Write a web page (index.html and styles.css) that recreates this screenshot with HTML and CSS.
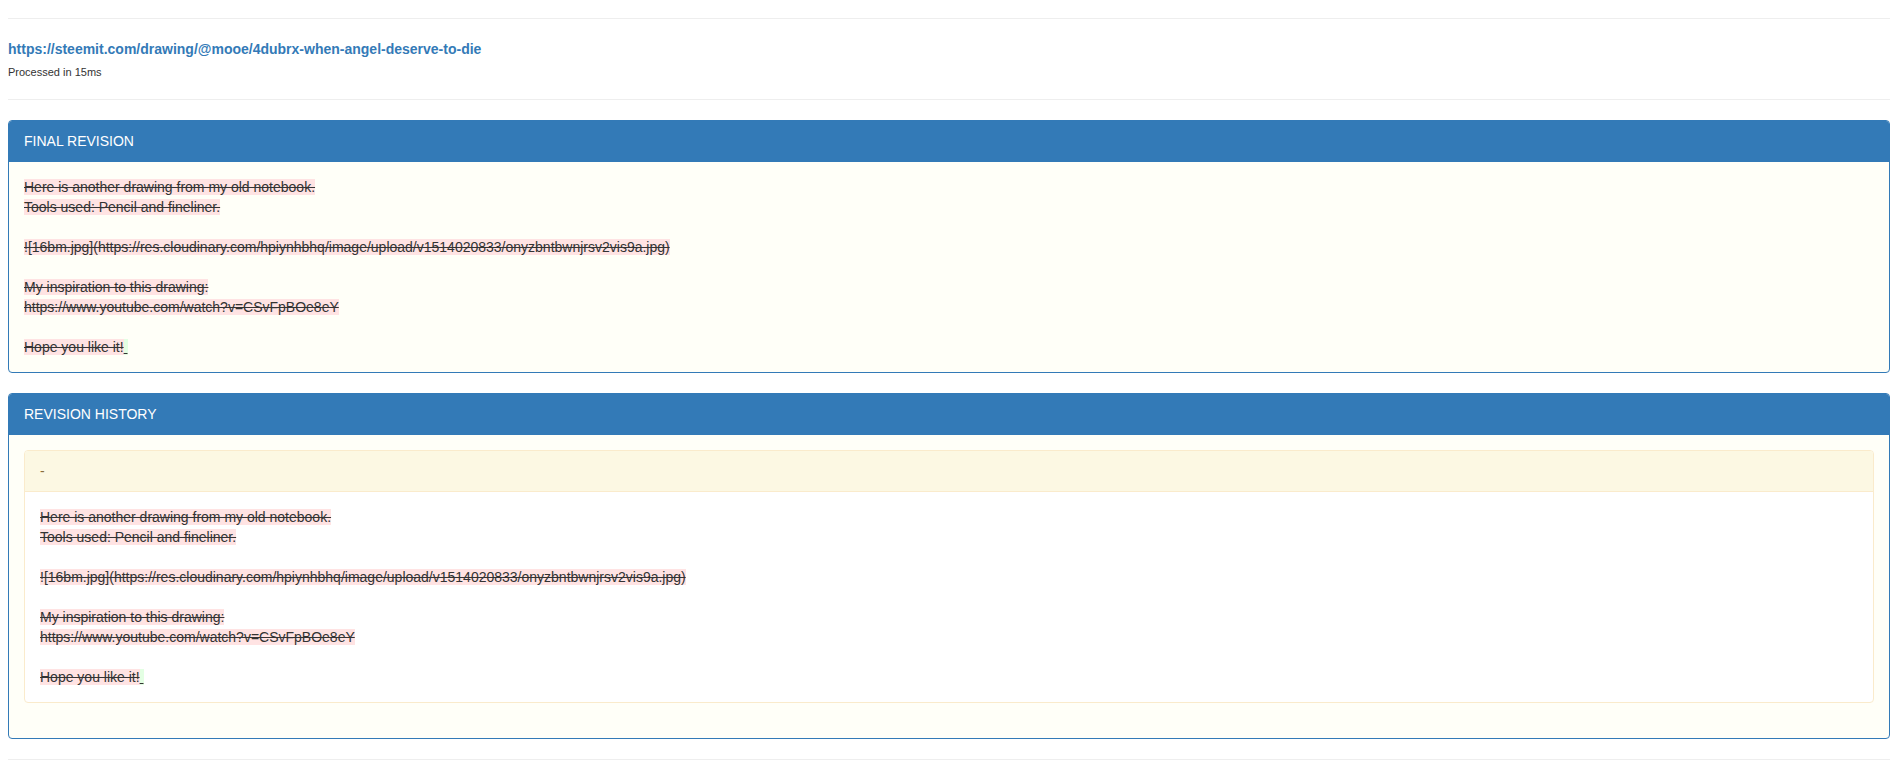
FILE: index.html
```html
<!DOCTYPE html>
<html lang="en">

<head>
    <meta charset="UTF-8">
    <title>Steemit revision diff</title>
    <link rel="stylesheet" href="styles.css">
</head>

<body>
    <div class="container">
        <hr>
        <div class="source">
            <a href="#" class="source-link">https://steemit.com/drawing/@mooe/4dubrx-when-angel-deserve-to-die</a>
            <small class="timing">Processed in 15ms</small>
        </div>
        <hr>

        <div class="panel panel-primary">
            <div class="panel-heading">FINAL REVISION</div>
            <div class="panel-body">
                <div class="diff"><del>Here is another drawing from my old notebook.</del>
<del>Tools used: Pencil and fineliner.</del>

<del>![16bm.jpg](https://res.cloudinary.com/hpiynhbhq/image/upload/v1514020833/onyzbntbwnjrsv2vis9a.jpg)</del>

<del>My inspiration to this drawing:</del>
<del>https://www.youtube.com/watch?v=CSvFpBOe8eY</del>

<del>Hope you like it!</del><ins> </ins></div>
            </div>
        </div>

        <div class="panel panel-primary">
            <div class="panel-heading">REVISION HISTORY</div>
            <div class="panel-body">
                <div class="panel panel-warning">
                    <div class="panel-heading">-</div>
                    <div class="panel-body">
                        <div class="diff"><del>Here is another drawing from my old notebook.</del>
<del>Tools used: Pencil and fineliner.</del>

<del>![16bm.jpg](https://res.cloudinary.com/hpiynhbhq/image/upload/v1514020833/onyzbntbwnjrsv2vis9a.jpg)</del>

<del>My inspiration to this drawing:</del>
<del>https://www.youtube.com/watch?v=CSvFpBOe8eY</del>

<del>Hope you like it!</del><ins> </ins></div>
                    </div>
                </div>
            </div>
        </div>
        <hr>
    </div>
</body>

</html>
```

FILE: styles.css
```css
body {
    margin: 0;
    font-family: "Liberation Sans", Arial, sans-serif;
    font-size: 14px;
    line-height: 20px;
    color: #333;
    background: #fff;
}

.container {
    padding: 0 7px 0 8px;
}

hr {
    margin: 18px 0 20px 0;
    border: 0;
    border-top: 1px solid #eee;
}

.source-link {
    display: block;
    font-weight: bold;
    color: #337ab7;
    text-decoration: none;
}

.timing {
    display: block;
    margin-top: 5px;
    font-size: 11px;
    line-height: 17px;
    color: #333;
}

.panel {
    margin-bottom: 20px;
    background: #fffff8;
    border: 1px solid transparent;
    border-radius: 4px;
}

.panel-heading {
    padding: 10px 15px;
    border-bottom: 1px solid transparent;
    border-top-left-radius: 3px;
    border-top-right-radius: 3px;
}

.panel-body {
    padding: 15px;
}

.panel-primary {
    border-color: #337ab7;
}

.panel-primary > .panel-heading {
    color: #fff;
    background: #337ab7;
    border-color: #337ab7;
}

.panel-warning {
    background: #fff;
    border-color: #faebcc;
}

.panel-warning > .panel-heading {
    color: #8a6d3b;
    background: #fcf8e3;
    border-color: #faebcc;
}

.diff {
    white-space: pre-wrap;
}

del {
    background: #ffe3e3;
    text-decoration: line-through;
}

ins {
    background: #e3ffe3;
    text-decoration: underline;
}
```
